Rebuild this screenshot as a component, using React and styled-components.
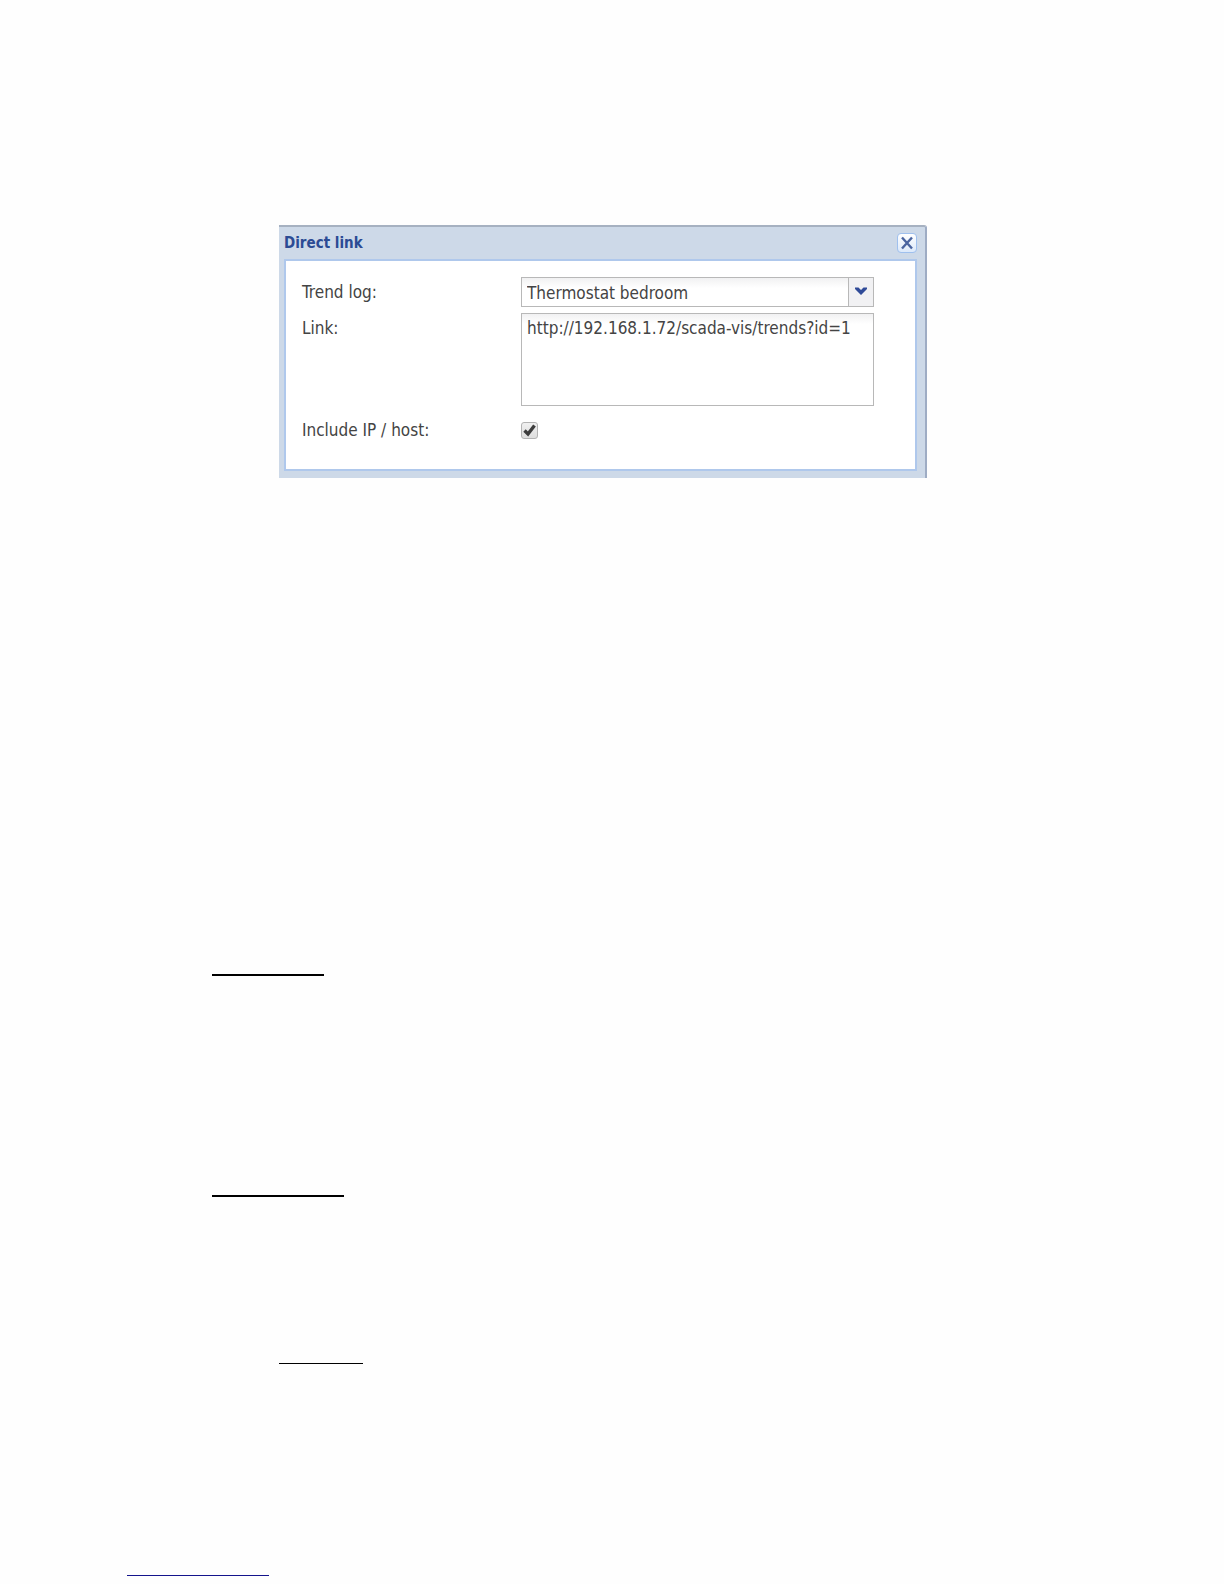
import React, { useState } from "react";
import styled, { createGlobalStyle } from "styled-components";

const GlobalStyle = createGlobalStyle`
  *, *::before, *::after { box-sizing: border-box; }
  body {
    margin: 0;
    background: #fefefe;
    color: #444444;
    font-family: "DejaVu Sans Condensed", "DejaVu Sans", Tahoma, sans-serif;
    font-size: 17px;
    line-height: 20px;
  }
`;

const Page = styled.main`
  display: flex;
  flex-direction: column;
  padding: 225px 24px 8px 127px;
`;

const Dialog = styled.section`
  width: 100%;
  max-width: 648px;
  margin-left: 152px;
  padding: 0 8px 7px 5px;
  background: #cdd9e8;
  border-top: 2px solid #a6b1c1;
  border-right: 2px solid #9eacc4;
  border-top-right-radius: 3px;
`;

const Header = styled.header`
  display: flex;
  align-items: center;
  justify-content: space-between;
  height: 32px;
`;

const Title = styled.h1`
  margin: 0;
  color: #2b4b94;
  font-size: 15px;
  font-weight: bold;
  line-height: 20px;
`;

const CloseButton = styled.button`
  display: flex;
  align-items: center;
  justify-content: center;
  width: 20px;
  height: 20px;
  padding: 0;
  border: 1px solid #9fc0ee;
  border-radius: 4px;
  background: linear-gradient(#ffffff, #dce9fa);
  color: #4a649f;
  cursor: pointer;
`;

const Body = styled.form`
  display: flex;
  flex-direction: column;
  gap: 6px;
  padding: 16px 41px 21px 16px;
  background: #ffffff;
  border: 2px solid #afc8ec;
`;

const Row = styled.div`
  display: grid;
  grid-template-columns: 219px minmax(0, 1fr);
`;

const CheckRow = styled(Row)`
  align-items: center;
  min-height: 36px;
`;

const Label = styled.label`
  padding-top: ${(p) => (p.$centered ? 0 : 5)}px;
`;

const SelectBox = styled.div`
  display: grid;
  grid-template-columns: minmax(0, 1fr) 25px;
  height: 30px;
  border: 1px solid #b8b8b8;
  background: linear-gradient(#f1f1f2, #ffffff 10px);
`;

const Select = styled.select`
  grid-area: 1 / 1 / 2 / 3;
  appearance: none;
  padding: 1px 30px 0 5px;
  border: 0;
  background: transparent;
  color: inherit;
  font: inherit;
`;

const Trigger = styled.span`
  grid-area: 1 / 2 / 2 / 3;
  display: flex;
  align-items: center;
  justify-content: center;
  border-left: 1px solid #b8b8b8;
  background: #f1f1f3;
  color: #304b98;
  pointer-events: none;
`;

const LinkText = styled.textarea`
  display: block;
  height: 93px;
  padding: 4px 5px;
  resize: none;
  border: 1px solid #b8b8b8;
  border-radius: 0;
  background: linear-gradient(#f1f1f2, #ffffff 10px);
  color: inherit;
  font: inherit;
`;

const CheckCell = styled.div`
  display: grid;
  justify-self: start;
`;

const Checkbox = styled.input`
  grid-area: 1 / 1;
  appearance: none;
  width: 17px;
  height: 17px;
  margin: 0;
  border: 1px solid #b3b3b3;
  border-radius: 3px;
  background: linear-gradient(#f0f0f0, #dedede);
`;

const CheckMark = styled.svg`
  grid-area: 1 / 1;
  color: #3d3d3d;
  pointer-events: none;
`;

const Rule = styled.hr`
  width: ${(p) => p.$length}px;
  height: ${(p) => p.$weight}px;
  margin: ${(p) => p.$space}px 0 0 ${(p) => p.$indent}px;
  border: 0;
  background: ${(p) => p.$color || "#000000"};
`;

export default function App() {
  const [log, setLog] = useState("1");
  const [link, setLink] = useState("http://192.168.1.72/scada-vis/trends?id=1");
  const [host, setHost] = useState(true);

  return (
    <>
      <GlobalStyle />
      <Page>
        <Dialog role="dialog" aria-labelledby="dialog-title">
          <Header>
            <Title id="dialog-title">Direct link</Title>
            <CloseButton type="button" aria-label="Close">
              <svg width="14" height="14" viewBox="0 0 14 14" fill="none" stroke="currentColor" strokeWidth="2.4">
                <path d="M2 1.5 12 12.5M12 1.5 2 12.5" />
              </svg>
            </CloseButton>
          </Header>
          <Body>
            <Row>
              <Label htmlFor="log">Trend log:</Label>
              <SelectBox>
                <Select id="log" value={log} onChange={(e) => setLog(e.target.value)}>
                  <option value="1">Thermostat bedroom</option>
                </Select>
                <Trigger>
                  <svg width="14" height="10" viewBox="0 0 14 10" fill="currentColor" aria-hidden="true">
                    <path d="M1 .5h3.500L7 3 9.500 .5H13V2L7 8 1 2Z" />
                  </svg>
                </Trigger>
              </SelectBox>
            </Row>
            <Row>
              <Label htmlFor="link">Link:</Label>
              <LinkText id="link" spellCheck={false} value={link} onChange={(e) => setLink(e.target.value)} />
            </Row>
            <CheckRow>
              <Label htmlFor="host" $centered>Include IP / host:</Label>
              <CheckCell>
                <Checkbox id="host" type="checkbox" checked={host} onChange={(e) => setHost(e.target.checked)} />
                {host && (
                  <CheckMark width="17" height="17" viewBox="0 0 17 17" fill="none" stroke="currentColor" strokeWidth="3.4" aria-hidden="true">
                    <path d="M3.500 8.500 7 12 13.500 3.500" />
                  </CheckMark>
                )}
              </CheckCell>
            </CheckRow>
          </Body>
        </Dialog>
        <Rule $length={112} $weight={2} $indent={85} $space={496} />
        <Rule $length={132} $weight={2} $indent={85} $space={219} />
        <Rule $length={84} $weight={1} $indent={152} $space={166} />
        <Rule $length={142} $weight={1} $indent={0} $space={211} $color="#14148c" />
      </Page>
    </>
  );
}
